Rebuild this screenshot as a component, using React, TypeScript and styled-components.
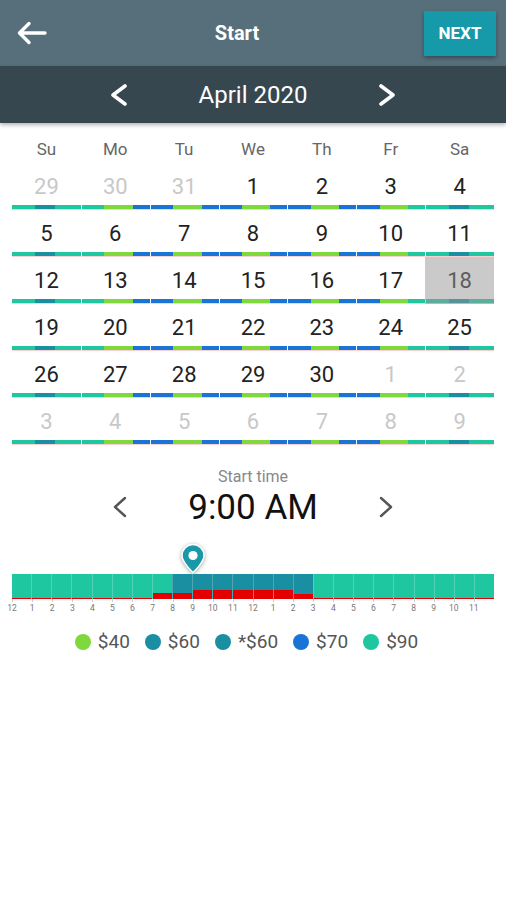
import React from 'react';
import styled, { createGlobalStyle } from 'styled-components';

const TEAL = '#1fc7a1';
const DARK_TEAL = '#1a8fa1';
const GREEN = '#7fd83c';
const BLUE = '#1a74d6';
const RED = '#e40000';

const GlobalStyle = createGlobalStyle`
  html, body {
    margin: 0;
    padding: 0;
    background: #fff;
  }
  body {
    font-family: Roboto, 'Noto Sans', Arial, sans-serif;
  }
`;

const Screen = styled.div`
  width: 506px;
  min-height: 900px;
  background: #fff;
`;

const Header = styled.div`
  height: 66px;
  display: flex;
  align-items: center;
  padding-right: 10px;
  background: #566f7b;
  color: #fff;
`;

const BackButton = styled.div`
  width: 50px;
  padding-left: 16px;
  box-sizing: border-box;
  display: flex;
  align-items: center;
`;

const Title = styled.div`
  flex: 1;
  text-align: center;
  font-size: 20px;
  font-weight: 700;
`;

const NextButton = styled.div`
  width: 72px;
  height: 45px;
  display: flex;
  align-items: center;
  justify-content: center;
  background: #1699a9;
  font-size: 17px;
  font-weight: 700;
  box-shadow: 0 2px 4px rgba(0, 0, 0, 0.35);
`;

const MonthBar = styled.div`
  position: relative;
  z-index: 1;
  height: 57px;
  display: flex;
  align-items: center;
  justify-content: center;
  background: #37474f;
  color: #fff;
  box-shadow: 0 2px 4px rgba(0, 0, 0, 0.3);
`;

const Stepper = styled.div<{ $size: number }>`
  width: 250px;
  text-align: center;
  font-size: ${(p) => p.$size}px;
`;

const Calendar = styled.div`
  padding: 12px 12px 0;
`;

const WeekGrid = styled.div`
  display: grid;
  grid-template-columns: repeat(7, 1fr);
`;

const DayName = styled.div`
  height: 28px;
  line-height: 28px;
  text-align: center;
  font-size: 17px;
  color: #666;
`;

const Cell = styled.div`
  position: relative;
  display: flex;
  flex-direction: column;
`;

const DayNumber = styled.div<{ $muted: boolean }>`
  height: 42px;
  padding-top: 6px;
  box-sizing: border-box;
  line-height: 36px;
  text-align: center;
  font-size: 22px;
  color: ${(p) => (p.$muted ? '#c8c8c8' : '#222')};
`;

const Selected = styled.div`
  position: absolute;
  inset: 0;
  background: rgba(150, 150, 150, 0.5);
`;

const DayBar = styled.div<{ $first: boolean }>`
  height: 4px;
  display: flex;
  border-bottom: 1px solid rgba(228, 0, 0, 0.18);
  border-left: ${(p) => (p.$first ? 'none' : '1px solid rgba(255,255,255,0.35)')};
`;

const BarPart = styled.div<{ $color: string; $hours: number }>`
  flex: ${(p) => p.$hours};
  background: ${(p) => p.$color};
`;

const TimeSection = styled.div`
  margin-top: 22px;
  text-align: center;
`;

const TimeLabel = styled.div`
  line-height: 20px;
  font-size: 16px;
  color: #888;
`;

const TimeRow = styled.div`
  height: 40px;
  display: flex;
  align-items: center;
  justify-content: center;
  color: #111;
`;

const Timeline = styled.div`
  position: relative;
  margin: 16px 12px 0;
  padding-top: 31px;
`;

const Pin = styled.svg`
  position: absolute;
  top: 0;
  filter: drop-shadow(0 1px 2px rgba(0, 0, 0, 0.35));
`;

const HourBar = styled.div`
  display: flex;
  height: 25px;
`;

const Hour = styled.div<{ $color: string }>`
  position: relative;
  flex: 1;
  background: ${(p) => p.$color};
  border-left: 1px solid rgba(255, 255, 255, 0.22);
  &:first-child {
    border-left: none;
  }
`;

const Load = styled.div<{ $h: number }>`
  position: absolute;
  left: 0;
  right: 0;
  bottom: 0;
  height: ${(p) => p.$h}px;
  background: ${RED};
`;

const Ticks = styled.div`
  display: flex;
  height: 3px;
`;

const Tick = styled.div`
  flex: 1;
  border-left: 1px solid #ccc;
`;

const HourLabels = styled.div`
  display: flex;
  margin-left: -10px;
  margin-right: 10px;
`;

const HourLabel = styled.div`
  flex: 1;
  text-align: center;
  font-size: 8.5px;
  line-height: 12px;
  color: #777;
`;

const Legend = styled.div`
  display: flex;
  justify-content: center;
  margin-top: 17px;
  padding-left: 2px;
`;

const LegendItem = styled.div`
  display: flex;
  align-items: center;
  gap: 7px;
  margin-right: 15px;
  font-size: 19px;
  line-height: 22px;
  color: #555;
`;

const Dot = styled.span<{ $color: string }>`
  width: 16px;
  height: 16px;
  border-radius: 50%;
  background: ${(p) => p.$color};
`;

const Chevron = ({ dir, color, width, stroke }: { dir: 'l' | 'r'; color: string; width: number; stroke: number }) => (
  <svg width={width} height={22} viewBox={`0 0 ${width} 22`}>
    <polyline
      points={dir === 'l' ? `${width - 3},2 3,11 ${width - 3},20` : `3,2 ${width - 3},11 3,20`}
      fill="none"
      stroke={color}
      strokeWidth={stroke}
      strokeLinecap="round"
      strokeLinejoin="round"
    />
  </svg>
);

const dayNames = ['Su', 'Mo', 'Tu', 'We', 'Th', 'Fr', 'Sa'];

const weeks = [
  [29, 30, 31, 1, 2, 3, 4],
  [5, 6, 7, 8, 9, 10, 11],
  [12, 13, 14, 15, 16, 17, 18],
  [19, 20, 21, 22, 23, 24, 25],
  [26, 27, 28, 29, 30, 1, 2],
  [3, 4, 5, 6, 7, 8, 9],
];

// price blocks per weekday, in hours
const schedule: [string, number][][] = [
  [[TEAL, 8], [DARK_TEAL, 7], [TEAL, 9]],
  [[TEAL, 8], [GREEN, 10], [BLUE, 6]],
  [[BLUE, 8], [GREEN, 10], [BLUE, 6]],
  [[BLUE, 8], [GREEN, 10], [BLUE, 6]],
  [[BLUE, 8], [GREEN, 10], [BLUE, 6]],
  [[BLUE, 8], [GREEN, 10], [TEAL, 6]],
  [[TEAL, 8], [DARK_TEAL, 7], [TEAL, 9]],
];

const isMuted = (w: number, d: number) => (w === 0 && weeks[0][d] > 20) || (w >= 4 && weeks[w][d] < 15);

const hourLoad = (h: number) => {
  if (h >= 7 && h < 9) return 6;
  if (h >= 9 && h < 14) return 9;
  if (h === 14) return 5;
  return 1.5;
};

const hours = Array.from({ length: 24 }, (_, h) => h);
const hourText = (h: number) => String(h % 12 === 0 ? 12 : h % 12);

const legend: [string, string][] = [
  [GREEN, '$40'],
  [DARK_TEAL, '$60'],
  [DARK_TEAL, '*$60'],
  [BLUE, '$70'],
  [TEAL, '$90'],
];

const startHour = 9;

export default function App() {
  return (
    <Screen>
      <GlobalStyle />
      <Header>
        <BackButton>
          <svg width="31" height="24" viewBox="0 0 31 24">
            <path d="M29 12H4M13 2.5L3.5 12l9.5 9.5" fill="none" stroke="#fff" strokeWidth="3.4" strokeLinecap="round" strokeLinejoin="round" />
          </svg>
        </BackButton>
        <Title>Start</Title>
        <NextButton>NEXT</NextButton>
      </Header>

      <MonthBar>
        <Chevron dir="l" color="#fff" width={18} stroke={3.6} />
        <Stepper $size={24}>April 2020</Stepper>
        <Chevron dir="r" color="#fff" width={18} stroke={3.6} />
      </MonthBar>

      <Calendar>
        <WeekGrid>
          {dayNames.map((n) => (
            <DayName key={n}>{n}</DayName>
          ))}
        </WeekGrid>
        {weeks.map((week, w) => (
          <WeekGrid key={w}>
            {week.map((day, d) => {
              const selected = w === 2 && d === 6;
              return (
                <Cell key={d}>
                  <DayNumber $muted={isMuted(w, d)}>{day}</DayNumber>
                  <DayBar $first={d === 0}>
                    {schedule[d].map(([c, hrs], i) => (
                      <BarPart key={i} $color={c} $hours={hrs} />
                    ))}
                  </DayBar>
                  {selected && <Selected />}
                </Cell>
              );
            })}
          </WeekGrid>
        ))}
      </Calendar>

      <TimeSection>
        <TimeLabel>Start time</TimeLabel>
        <TimeRow>
          <Chevron dir="l" color="#555" width={16} stroke={2.4} />
          <Stepper $size={35}>9:00 AM</Stepper>
          <Chevron dir="r" color="#555" width={16} stroke={2.4} />
        </TimeRow>
      </TimeSection>

      <Timeline>
        <Pin width="26" height="31" viewBox="0 0 26 31" style={{ left: `calc(${(startHour / 24) * 100}% - 13px)` }}>
          <path d="M13 29.5C13 29.5 2 19.5 2 12.5a11 11 0 1 1 22 0c0 7-11 17-11 17z" fill="#1898a8" stroke="#fff" strokeWidth="1.5" />
          <circle cx="13" cy="12.5" r="4.6" fill="#fff" />
        </Pin>
        <HourBar>
          {hours.map((h) => (
            <Hour key={h} $color={h >= 8 && h < 15 ? DARK_TEAL : TEAL}>
              <Load $h={hourLoad(h)} />
            </Hour>
          ))}
        </HourBar>
        <Ticks>
          {hours.map((h) => (
            <Tick key={h} />
          ))}
        </Ticks>
        <HourLabels>
          {hours.map((h) => (
            <HourLabel key={h}>{hourText(h)}</HourLabel>
          ))}
        </HourLabels>
      </Timeline>

      <Legend>
        {legend.map(([c, t]) => (
          <LegendItem key={t}>
            <Dot $color={c} />
            {t}
          </LegendItem>
        ))}
      </Legend>
    </Screen>
  );
}
